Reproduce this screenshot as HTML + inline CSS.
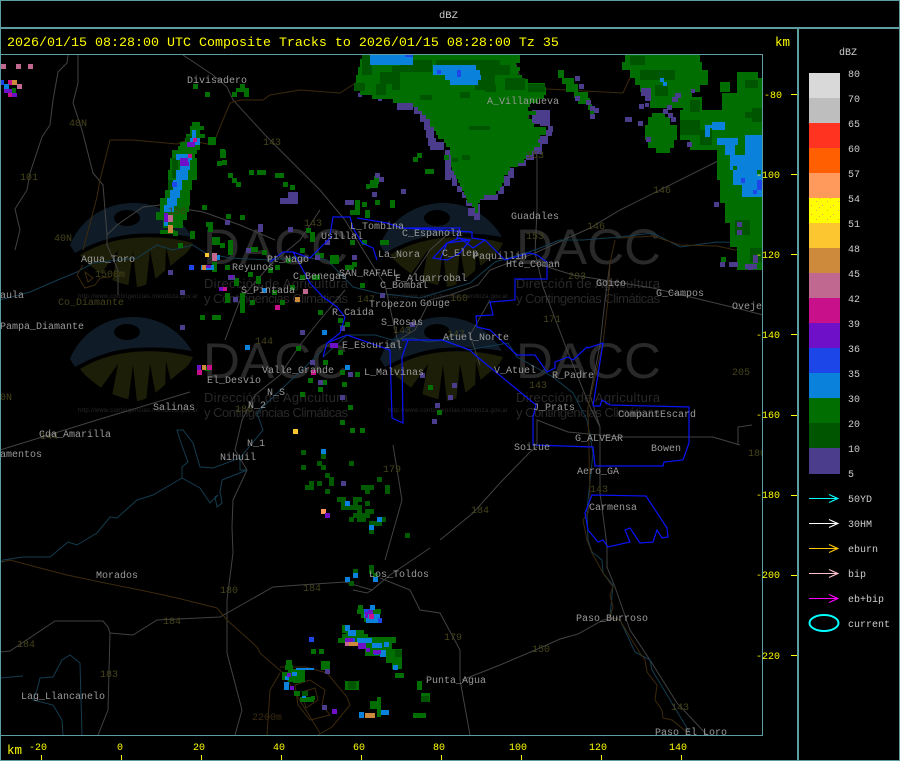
<!DOCTYPE html>
<html><head><meta charset="utf-8"><title>dBZ</title>
<style>
html,body{margin:0;padding:0;background:#000;width:900px;height:761px;overflow:hidden}
svg{display:block}
text{font-family:"Liberation Mono",monospace;font-size:10px}
.l text{fill:#9a9a9a}
.o text{fill:#45431a}
.y text{fill:#ff0}
.w text{fill:#292929;font-family:"Liberation Sans",sans-serif}
.c path,.c rect{shape-rendering:crispEdges}
</style></head><body>
<svg width="900" height="761" viewBox="0 0 900 761" xmlns="http://www.w3.org/2000/svg">
<defs><pattern id="sp" width="11" height="9" patternUnits="userSpaceOnUse"><rect x="2" y="3" width="1" height="1" fill="#f0a050"/><rect x="8" y="7" width="1" height="1" fill="#f09060"/><rect x="5" y="0" width="1" height="1" fill="#e8b040"/></pattern></defs>
<rect width="900" height="761" fill="#000"/>

<!-- watermark eyes -->
<g>
<path fill="#0f1c28" d="M70 245C80 220 105 203 133 203C160 203 180 217 192 237C170 233 152 233 133 234C112 236 92 243 75 253Z"/><ellipse cx="127" cy="218" rx="13" ry="8" fill="#000"/><path fill="#1c1e08" d="M80 255C95 246 112 240 133 238C155 236 175 238 193 243C190 250 186 254 180 258L160 275C152 282 145 286 137 287C122 284 112 281 103 275C93 268 85 262 80 255Z"/><path fill="#000" d="M118 250L98 278L112 282ZM133 251L128 288L137 288ZM150 250L146 288L156 282ZM166 247L165 279L172 272Z"/>
<path fill="#0f1c28" d="M380 245C390 220 415 203 443 203C470 203 490 217 502 237C480 233 462 233 443 234C422 236 402 243 385 253Z"/><ellipse cx="437" cy="218" rx="13" ry="8" fill="#000"/><path fill="#1c1e08" d="M390 255C405 246 422 240 443 238C465 236 485 238 503 243C500 250 496 254 490 258L470 275C462 282 455 286 447 287C432 284 422 281 413 275C403 268 395 262 390 255Z"/><path fill="#000" d="M428 250L408 278L422 282ZM443 251L438 288L447 288ZM460 250L456 288L466 282ZM476 247L475 279L482 272Z"/>
<path fill="#0f1c28" d="M70 359C80 334 105 317 133 317C160 317 180 331 192 351C170 347 152 347 133 348C112 350 92 357 75 367Z"/><ellipse cx="127" cy="332" rx="13" ry="8" fill="#000"/><path fill="#1c1e08" d="M80 369C95 360 112 354 133 352C155 350 175 352 193 357C190 364 186 368 180 372L160 389C152 396 145 400 137 401C122 398 112 395 103 389C93 382 85 376 80 369Z"/><path fill="#000" d="M118 364L98 392L112 396ZM133 365L128 402L137 402ZM150 364L146 402L156 396ZM166 361L165 393L172 386Z"/>
<path fill="#0f1c28" d="M380 359C390 334 415 317 443 317C470 317 490 331 502 351C480 347 462 347 443 348C422 350 402 357 385 367Z"/><ellipse cx="437" cy="332" rx="13" ry="8" fill="#000"/><path fill="#1c1e08" d="M390 369C405 360 422 354 443 352C465 350 485 352 503 357C500 364 496 368 490 372L470 389C462 396 455 400 447 401C432 398 422 395 413 389C403 382 395 376 390 369Z"/><path fill="#000" d="M428 364L408 392L422 396ZM443 365L438 402L447 402ZM460 364L456 402L466 396ZM476 361L475 393L482 386Z"/>
</g>
<g class="w">
<text x="203" y="264" textLength="145" lengthAdjust="spacingAndGlyphs" style="font-size:50px">DACC</text>
<text x="516" y="264" textLength="145" lengthAdjust="spacingAndGlyphs" style="font-size:50px">DACC</text>
<text x="203" y="378" textLength="145" lengthAdjust="spacingAndGlyphs" style="font-size:50px">DACC</text>
<text x="516" y="378" textLength="145" lengthAdjust="spacingAndGlyphs" style="font-size:50px">DACC</text>
<text x="204" y="288" textLength="144" style="font-size:13px">Dirección de Agricultura</text>
<text x="204" y="303" textLength="144" style="font-size:13px">y Contingencias Climáticas</text>
<text x="516" y="288" textLength="144" style="font-size:13px">Dirección de Agricultura</text>
<text x="516" y="303" textLength="144" style="font-size:13px">y Contingencias Climáticas</text>
<text x="204" y="402" textLength="144" style="font-size:13px">Dirección de Agricultura</text>
<text x="204" y="417" textLength="144" style="font-size:13px">y Contingencias Climáticas</text>
<text x="516" y="402" textLength="144" style="font-size:13px">Dirección de Agricultura</text>
<text x="516" y="417" textLength="144" style="font-size:13px">y Contingencias Climáticas</text>
<text x="78" y="298" textLength="120" style="font-size:6px">http://www.contingencias.mendoza.gov.ar</text>
<text x="388" y="298" textLength="120" style="font-size:6px">http://www.contingencias.mendoza.gov.ar</text>
<text x="78" y="412" textLength="120" style="font-size:6px">http://www.contingencias.mendoza.gov.ar</text>
<text x="388" y="412" textLength="120" style="font-size:6px">http://www.contingencias.mendoza.gov.ar</text>
</g>

<!-- roads -->
<g fill="none" stroke="#424242" stroke-width="1">
<path d="M68 55L67 63L58 72L53 100L50 125L42 137L30 173L27 190L15 209L20 230L15 250"/>
<path d="M78 55V83L73 103L82 130L93 173L103 185L107 235V245L118 270V295"/>
<path d="M107 235L117 225L143 207L160 205L203 212L240 225L275 240"/>
<path d="M183 55L213 75L227 87L233 100L267 137L293 163L320 190L345 220L360 245L385 285L395 330L400 350"/>
<path d="M513 55L520 77L527 107L532 137L537 157V210L535 253L543 287L567 350L590 407L600 427V493L605 530L607 548V567L615 587L630 630L650 660L677 703L707 735"/>
<path d="M762 139L620 210L590 228L535 253L490 270L478 285L450 295L430 300L415 330L390 345"/>
<path d="M535 263L573 275L653 288L740 309L763 315"/>
<path d="M440 540L473 513L500 483L530 452L537 447V420L555 427L568 432L620 437H713L740 445M738 445V427L752 425"/>
<path d="M242 420L235 450L247 470L233 500L232 527L233 553L227 600V653L242 710L235 735M242 420L255 395L280 375L300 345L320 320L345 290"/>
<path d="M0 652L10 651L55 621H103L108 627L110 633L108 710L98 735M110 633L133 635L157 620L220 617L250 600L273 587L300 585L345 582L372 590L367 593L353 590"/>
<path d="M372 590L390 575L430 548M380 578L410 590L420 610L440 613L460 650V680L470 735"/>
<path d="M462 680L500 665L540 648L560 639L578 634L603 620L618 618"/>
<path d="M0 450L97 420L190 392"/>
<path d="M610 263L605 300L600 345L590 395L600 427"/>
<path d="M320 210L300 240L270 265L240 300L225 340M410 280L430 250L450 232M490 300L470 335L480 365"/>
<path d="M393 445L402 500L385 560"/>
</g>
<!-- rivers -->
<g fill="none" stroke="#143c50" stroke-width="1">
<path d="M0 300L30 292L60 279L77 272L93 263L137 258L157 245L173 250L193 245L205 253L230 258L270 260L303 257L327 260L353 287L377 293L420 298L470 283L495 262L535 250L560 240H583L620 237L653 233L680 247L717 242L763 243"/>
<path d="M323 357L347 335H375L392 340L412 338L428 342L445 340L468 350L508 343L517 357L553 377L573 393L587 420L593 453L587 510L588 540L592 552L602 560L603 573L613 585L610 617L620 620L635 652L650 660L652 670L690 733"/>
<path d="M323 350L270 400L257 413L263 430L240 458L213 468L200 467L193 443L183 430H177L180 440L188 462L182 467V478L200 488L210 503L218 495L215 497L217 507L222 503L220 492L222 480L247 470H240L240 458"/>
<path d="M182 478L153 495L137 500L117 518L110 517L97 533L77 545L68 542L50 557H23L3 560L0 563"/>
<path d="M0 678L23 676M82 735L80 663L70 655L62 660L53 677L40 678L37 690L33 700L53 705L62 720L63 735"/>
</g>
<!-- brown -->
<g fill="none" stroke="#3c2a0c" stroke-width="1">
<path d="M83 250L97 197L100 180L110 140H133L177 144L187 140L213 145L220 127L230 103L240 100H263L270 95L300 90L340 93L357 82L370 72H387L400 75L413 82L427 87H453L473 82L487 87L547 89L623 93L635 67L640 55"/>
<path d="M2 562L10 560L40 568L67 575L100 582L140 590L177 598L217 608L227 620L257 647L260 653L283 673L320 733"/>
<path d="M615 240L610 263L608 300L603 343L588 407L590 497L588 513L583 520L587 540L592 553L603 573L613 587L610 595L613 607L610 617L620 620L630 637L640 653L645 660L647 672L657 685L655 700L662 710L663 718L672 720L688 733"/>
<path d="M620 238L653 236L680 245L717 246L735 250L760 244"/>
<path d="M280 673L270 690L267 735M280 667H305L327 673L347 697L350 705L332 727L318 735M295 685L310 680L325 690L322 705L330 715L310 720L298 705ZM302 692L315 688L318 700L306 708Z"/>
<path d="M83 265L77 275L85 288L95 285L100 278L110 277M85 272L93 278L88 282Z"/>
</g>

<!-- radar cells -->
<g class="c">
<!-- indigo edge main -->
<path fill="#4b3c8c" d="M398 90h8v8h-8zM397 98h16v12h-16zM414 106h10v8h-10zM420 114h10v8h-10zM424 122h10v8h-10zM426 130h8v8h-8zM428 138h8v8h-8zM430 142h14v8h-14zM436 130h10v5h-10zM445 150h6v30h-6zM450 170h6v8h-6zM452 178h5v8h-5zM457 186h5v6h-5zM462 192h5v6h-5zM466 200h10v6h-10zM474 204h6v16h-6zM468 208h6v8h-6zM478 194h20v6h-20zM498 186h6v8h-6zM504 176h6v10h-6zM508 168h6v10h-6zM518 160h8v6h-8zM526 150h8v10h-8zM534 144h8v10h-8zM538 136h10v8h-10zM546 130h6v6h-6zM548 126h5v6h-5zM540 120h10v6h-10zM532 110h18v14h-18zM528 94h5v5h-5zM510 94h5v5h-5zM358 93h4v4h-4zM378 97h4v4h-4z"/>
<!-- main blob green -->
<path fill="#006e00" d="M362 55H520V59H362zM360 59H520V63H360zM360 63H516V67H360zM358 67H520V71H358zM358 71H518V75H358zM356 75H522V79H356zM356 79H528V83H356zM354 83H545V87H354zM354 87H546V91H354zM360 91H546V95H360zM372 95H544V99H372zM393 99H538V103H393zM413 103H530V107H413zM418 107H528V111H418zM422 111H536V115H422zM426 115H528V119H426zM430 119H532V123H430zM430 123H534V127H430zM434 127H546V131H434zM436 131H546V135H436zM438 135H540V139H438zM444 139H538V143H444zM446 143H540V147H446zM450 147H534V151H450zM450 151H532V155H450zM451 155H526V159H451zM451 159H524V163H451zM451 163H518V167H451zM452 167H510V171H452zM454 171H508V175H454zM456 175H504V179H456zM458 179H504V183H458zM460 183H502V187H460zM462 187H500V191H462zM464 191H496V195H464zM466 195H484V199H466zM467 199H480V203H467zM472 203H478V207H472zM475 207H478V213H475z"/>
<path fill="#005500" d="M362 55H372V75H362zM380 72H400V84H380zM354 83H365V91H354zM400 60H432V72H400zM376 84H386V95H376zM392 66H400V90H392zM436 60H500V65H436zM470 65H510V75H470zM475 75H495V90H475zM505 78H525V90H505zM528 84H545V92H528zM485 85H496V92H485zM420 95H432V100H420zM460 92H470V98H460zM452 158H458V162H452zM469 126H490V130H469zM462 155H470V160H462z"/>
<path fill="#0a82dc" d="M370 55H413V65H370zM433 65H476V70H433zM433 70H480V75H433zM445 75H481V80H445zM450 80H478V85H450z"/>
<path fill="#1c46e8" d="M405 55H413V57H405zM437 70H441V74H437zM457 70H461V77H457z"/>
<!-- satellite cells -->
<path fill="#006e00" d="M558 70H564V78H558zM562 78H574V84H562zM566 84H578V92H566zM574 92H588V98H574zM578 98H590V104H578zM588 104H592V110H588zM590 110H594V115H590z"/>
<path fill="#4b3c8c" d="M575 76h5v5h-5zM579 84h5v5h-5zM575 96h5v5h-5zM586 100h5v5h-5zM590 106h5v5h-5zM594 108h5v5h-5zM590 114h5v5h-5zM627 117h5v5h-5zM638 121h5v5h-5z"/>
<path fill="#006e00" d="M440 110h5v5h-5zM444 155h5v5h-5zM417 153h5v5h-5zM413 157h5v5h-5zM425 169h9v5h-9zM374 176h5v8h-5zM370 180h8v8h-8zM366 184h4v5h-4z"/>
<path fill="#4b3c8c" d="M375 173h5v5h-5zM379 177h5v5h-5zM372 192h5v5h-5zM401 189h5v5h-5z"/>
<!-- top right -->
<path fill="#006e00" d="M625 55H700V62H625zM622 62H702V70H622zM630 70H708V78H630zM635 78H708V85H635zM640 85H700V92H640zM645 92H692V100H645zM650 100H690V108H650zM652 113H665V117H652zM648 117H670V125H648zM645 125H677V140H645zM648 140H674V148H648zM656 148H670V153H656zM737 72H758V78H737zM737 78H762V93H737zM720 82H730V92H720zM722 93H762V110H722zM683 97H702V110H683zM680 110H762V140H680zM690 140H762V150H690zM717 150H762V180H717zM720 180H762V203H720zM725 203H762V223H725zM730 223H762V247H730zM737 247H762V270H737z"/>
<path fill="#005500" d="M745 80H758V88H745zM680 120H700V135H680zM690 100H700V112H690zM640 70H675V80H640zM630 56H645V65H630zM655 85H668V96H655zM700 130H712V145H700zM752 108H762V122H752zM745 112H752V118H745zM735 220H750V235H735zM750 248H762V262H750z"/>
<path fill="#0a82dc" d="M705 125H725V128H705zM705 128H710V137H705zM712 122H725V130H712zM717 138H738V145H717zM725 145H735V155H725zM745 135H762V157H745zM730 155H762V170H730zM733 170H762V185H733zM742 185H762V197H742zM660 78h4v4h-4zM663 82h4v4h-4z"/>
<path fill="#1c46e8" d="M741 178h4v5h-4zM757 180h5v10h-5zM753 190h4v4h-4z"/>
<path fill="#006e00" d="M757 170h4v4h-4zM733 166h4v4h-4z"/>
<path fill="#4b3c8c" d="M641 88h10v8h-10zM645 96h6v5h-6zM645 103h4v4h-4zM672 97h6v5h-6zM675 93h6v5h-6zM691 89h4v4h-4zM667 105h5v5h-5zM639 104h5v5h-5zM663 109h5v5h-5zM668 113h5v5h-5zM671 117h5v5h-5zM625 117h5v5h-5zM646 137h5v5h-5zM687 142h5v5h-5zM714 202h5v5h-5zM737 222h5v5h-5zM737 230h5v5h-5zM753 255h5v8h-5zM720 262h5v5h-5zM729 262h9v5h-9zM745 264h12v5h-12zM748 264h5v6h-5z"/>
<path fill="#006e00" d="M721 257h5v5h-5z"/>
<!-- far left top -->
<path fill="#c06890" d="M0 64h6v5H0zM16 64h5v5h-5zM28 64h5v5h-5zM17 84h5v5h-5z"/>
<path fill="#c8108a" d="M8 80h4v5H8zM8 93h4v4H8z"/><path fill="#cd8a3c" d="M12 80h5v5h-5z"/><path fill="#1c46e8" d="M1 80h3v5H1z"/><path fill="#0a82dc" d="M4 84h5v5H4z"/><path fill="#6e10c8" d="M4 89h8v4H4zM12 93h5v4h-5z"/><path fill="#006e00" d="M12 88h4v5h-4z"/>
<!-- left storm -->
<path fill="#006e00" d="M192 122H200V126H192zM190 126H204V130H190zM190 130H200V134H190zM186 134H205V138H186zM185 138H200V142H185zM180 142H200V146H180zM178 146H200V150H178zM172 150H197V154H172zM172 154H195V158H172zM170 158H197V170H170zM168 170H197V180H168zM168 180H192V190H168zM165 190H190V198H165zM160 198H190V206H160zM160 206H189V212H160zM156 212H187V220H156zM163 220H183V228H163zM160 230H175V234H160zM208 137H216V145H208zM220 150h6v8h-6z"/>
<path fill="#005500" d="M172 158h6v20h-6zM168 180h5v10h-5zM186 136h6v6h-6z"/>
<path fill="#0a82dc" d="M192 130H196V138H192zM190 138H200V145H190zM176 154H192V160H176zM180 160H190V170H180zM176 170H188V180H176zM173 180H182V190H173zM170 190H180V198H170zM167 198H177V206H167zM164 205H174V212H164zM164 222H168V226H164z"/>
<path fill="#6e10c8" d="M180 158h8v8h-8zM180 162h9v4h-9zM187 142h8v5h-8zM164 213h4v9h-4z"/>
<path fill="#c8108a" d="M193 138h4v4h-4zM188 154h4v4h-4z"/>
<path fill="#1c46e8" d="M172 182h5v5h-5z"/>
<path fill="#c06890" d="M168 215h5v7h-5z"/><path fill="#cd8a3c" d="M168 225h5v8h-5z"/>
<!-- scattered green -->
<path fill="#006e00" d="M193 84h5v5h-5zM205 92h5v5h-5zM240 84h5v5h-5zM236 88h13v4h-13zM232 92h5v5h-5zM244 92h5v5h-5zM220 149h5v5h-5zM222 160h5v5h-5zM217 161h5v5h-5zM249 170h5v5h-5zM257 170h9v5h-9zM275 173h9v5h-9zM228 173h5v5h-5zM232 178h5v5h-5zM236 182h5v5h-5zM283 182h5v5h-5zM290 185h5v5h-5zM202 205h5v5h-5zM206 222h5v5h-5zM226 214h5v5h-5zM190 231h5v8h-5zM173 231h5v5h-5zM178 243h5v5h-5zM208 222h5v10h-5zM212 237h8v8h-8zM220 243h5v5h-5zM228 240h5v15h-5zM240 215h5v5h-5zM250 247h8v5h-8zM262 250h5v5h-5zM225 265h5v5h-5zM212 262h5v10h-5zM234 278h5v8h-5zM248 272h5v5h-5zM256 276h5v8h-5zM268 268h5v5h-5zM272 290h5v5h-5zM290 285h5v5h-5zM280 300h5v5h-5zM275 265h5v5h-5zM300 275h5v5h-5zM312 275h8v5h-8zM286 258h5v5h-5zM300 248h5v5h-5zM310 232h5v10h-5zM306 228h5v5h-5zM315 253h9v5h-9zM330 255h9v9h-9zM345 265h9v5h-9zM352 262h5v5h-5zM360 283h5v5h-5zM318 310h5v5h-5zM338 318h5v5h-5zM200 315h5v5h-5zM212 315h9v5h-9zM205 366h5v5h-5zM296 346h5v5h-5zM338 350h5v5h-5zM300 330h5v5h-5zM340 325h5v5h-5zM345 322h5v5h-5zM375 200h5v5h-5zM350 210h10v5h-10zM355 200h5v10h-5zM362 202h5v5h-5zM365 210h5v8h-5zM380 240h9v5h-9zM350 240h5v5h-5zM362 240h5v5h-5zM390 200h5v8h-5zM250 300h5v5h-5zM225 293h5v10h-5zM240 293h5v20h-5zM323 360h5v5h-5zM340 370h5v5h-5zM355 372h5v5h-5zM322 380h5v5h-5zM342 382h5v5h-5zM308 378h5v5h-5zM340 420h5v5h-5zM350 428h5v5h-5zM360 428h5v5h-5zM348 405h5v5h-5zM318 387h5v5h-5zM300 392h5v5h-5zM428 385h5v5h-5zM437 410h5v5h-5z"/>
<!-- mid cluster -->
<path fill="#005a00" d="M301 450h5v5h-5zM321 454h5v5h-5zM301 465h5v5h-5zM317 461h5v5h-5zM321 465h5v5h-5zM349 461h5v5h-5zM325 473h5v5h-5zM329 477h5v9h-5zM309 481h5v9h-5zM305 485h5v5h-5zM317 481h5v5h-5zM325 489h5v5h-5zM377 477h5v5h-5zM361 485h13v5h-13zM365 489h5v5h-5zM385 485h5v9h-5zM337 497h9v5h-9zM341 501h5v5h-5zM353 497h9v5h-9zM353 501h5v5h-5zM365 501h5v5h-5zM341 505h21v5h-21zM357 509h5v5h-5zM365 509h9v5h-9zM353 513h17v5h-17zM349 517h5v5h-5zM357 517h9v5h-9zM381 517h5v5h-5zM369 521h13v5h-13zM369 529h5v5h-5zM405 533h5v5h-5zM353 569h5v5h-5zM349 581h5v5h-5zM369 565h5v9h-5zM373 573h5v5h-5z"/>
<path fill="#0a82dc" d="M321 449h5v5h-5zM345 501h5v5h-5zM377 517h5v5h-5zM369 525h5v5h-5zM353 573h5v5h-5zM345 577h5v5h-5zM373 577h5v5h-5z"/>
<path fill="#4b3c8c" d="M341 481h5v5h-5z"/>
<path fill="#ff9a5c" d="M321 509h5v5h-5z"/><path fill="#6e10c8" d="M325 513h5v5h-5z"/>
<path fill="#4b3c8c" d="M345 200h9v5h-9zM258 224h5v8h-5zM225 220h5v5h-5zM300 330h5v5h-5zM348 372h5v5h-5zM410 322h5v5h-5zM420 373h5v5h-5zM452 383h5v5h-5zM448 395h5v5h-5zM435 403h5v5h-5zM432 419h5v5h-5zM340 395h5v5h-5zM180 290h5v5h-5zM230 275h5v5h-5zM233 297h5v5h-5zM380 293h5v5h-5zM352 255h5v5h-5zM315 255h5v5h-5zM288 227h5v5h-5zM325 240h5v5h-5zM246 248h5v5h-5zM340 326h5v5h-5zM310 360h5v5h-5zM318 380h5v5h-5zM180 325h5v5h-5zM228 275h5v5h-5zM168 270h5v5h-5zM288 192h10v12h-10zM280 198h10v6h-10z"/>
<path fill="#0a82dc" d="M201 265h13v5h-13zM262 288h5v5h-5zM322 330h5v5h-5zM345 365h5v5h-5zM245 345h5v5h-5zM214 255h6v5h-6z"/>
<path fill="#1c46e8" d="M189 265h5v5h-5z"/>
<path fill="#c8108a" d="M222 287h5v4h-5zM207 365h5v5h-5zM275 305h5v5h-5zM311 370h5v5h-5zM197 370h5v5h-5z"/>
<path fill="#6e10c8" d="M219 287h4v4h-4zM197 365h4v5h-4zM330 343h8v5h-8zM206 265h5v3h-5zM230 275h3v3h-3z"/>
<path fill="#cd8a3c" d="M202 265h4v5h-4zM295 297h5v5h-5zM202 365h4v5h-4z"/>
<path fill="#c06890" d="M212 253h5v8h-5zM303 289h5v5h-5z"/>
<path fill="#fcc630" d="M205 253h4v4h-4zM293 429h5v5h-5z"/>
<!-- lower clusters -->
<path fill="#006e00" d="M358 605h5v4h-5zM357 609h24v5h-24zM361 614h19v4h-19zM364 618h16v4h-16zM342 625h4v8h-4zM346 630h18v4h-18zM342 634h26v4h-26zM338 638h20v5h-20zM356 637h40v6h-40zM362 643h30v6h-30zM365 649h37v7h-37zM386 656h16v7h-16zM392 663h10v6h-10zM311 649h5v5h-5zM319 649h5v5h-5zM321 661h9v9h-9zM345 681h14v9h-14zM350 685h8v5h-8zM395 673h9v5h-9zM417 681h5v9h-5zM421 693h9v9h-9zM377 697h4v20h-4zM413 713h13v5h-13zM285 665h8v5h-8zM286 660h6v5h-6zM288 669h17v13h-17zM282 672h6v8h-6zM293 675h8v8h-8zM294 691h6v5h-6zM300 697h8v5h-8zM308 697h6v5h-6zM311 696h4v4h-4zM370 701h10v8h-10z"/>
<path fill="#0a82dc" d="M370 605h5v5h-5zM366 618h12v5h-12zM364 614h16v4h-16zM345 625h5v6h-5zM348 630h8v6h-8zM352 638h2v5h-2zM357 638h6v5h-6zM362 638h10v5h-10zM372 643h10v5h-10zM384 642h5v5h-5zM380 650h6v7h-6zM393 665h5v5h-5zM359 712h5v6h-5zM381 710h8v5h-8zM292 672h5v4h-5zM285 676h4v4h-4zM284 682h5v8h-5zM302 694h4v4h-4zM296 668h18v2h-18z"/>
<path fill="#1c46e8" d="M309 637h5v5h-5zM364 609h6v5h-6zM378 618h4v5h-4zM374 650h5v5h-5zM349 638h6v5h-6zM369 614h4v4h-4z"/>
<path fill="#6e10c8" d="M345 638h8v5h-8zM358 643h8v6h-8zM368 610h5v4h-5zM373 650h8v4h-8zM287 673h4v4h-4zM290 686h4v4h-4zM332 709h5v5h-5zM366 648h4v4h-4zM365 612h3v6h-3z"/>
<path fill="#c8108a" d="M369 614h5v5h-5z"/>
<path fill="#c06890" d="M345 642h5v4h-5z"/><path fill="#cd8a3c" d="M349 642h9v4h-9zM365 713h10v5h-10z"/>
<path fill="#4b3c8c" d="M325 669h5v5h-5zM322 705h5v5h-5z"/>
<path fill="#005500" d="M302 691h6v5h-6zM395 650h7v7h-7zM348 681h8v8h-8zM421 696h8v6h-8z"/>
</g>

<!-- zones -->
<g fill="none" stroke="#0a14f5" stroke-width="1.2">
<path d="M593 406H600L602 400L610 405L689 407V443L683 460L664 462L663 466H595L593 447L533 445V417L536 405L475 355L470 350L442 340H402"/>
<path d="M593 406L603 343L588 348L587 347L573 360L568 357L555 362V368L547 372L535 355H517L490 330L477 327L476 316L493 315L490 302L515 300V279H547V262L537 255L530 253L505 260L485 240L472 238V232L440 230L402 228H460L457 238L470 240"/>
<path d="M592 495L646 496L667 528L668 537L662 538L657 530L653 542L640 543L630 528L625 530L630 542L608 547L603 540L598 542L588 530L585 513Z"/>
<path d="M323 357L327 343L347 335L390 350L392 418L403 423L402 357L408 340"/>
<path d="M327 343L340 333L345 317L337 307L323 297L310 283L303 270L293 252H283L270 262"/>
<path d="M330 235L333 217H350L353 228L362 243L373 248L377 260M357 218L387 223L402 228M433 258L447 243L470 240L460 253L447 260ZM440 260L447 243L460 238L473 248L485 240"/>
<path d="M293 252L310 258L332 236"/>
</g>

<!-- olive road labels -->
<g class="o">
<text x="69" y="126">40N</text><text x="20" y="180">101</text><text x="54" y="241">40N</text><text x="168" y="214">150</text><text x="263" y="145">143</text><text x="304" y="226">143</text><text x="526" y="239">153</text><text x="526" y="158">153</text><text x="653" y="193">146</text><text x="587" y="229">146</text><text x="568" y="279">203</text><text x="543" y="322">171</text><text x="732" y="375">205</text><text x="447" y="337">147</text><text x="393" y="333">143</text><text x="357" y="302">147</text><text x="450" y="301">160</text><text x="255" y="344">144</text><text x="235" y="412">180</text><text x="529" y="388">143</text><text x="471" y="513">184</text><text x="590" y="492">143</text><text x="383" y="472">179</text><text x="303" y="591">184</text><text x="220" y="593">180</text><text x="163" y="624">184</text><text x="17" y="647">184</text><text x="100" y="677">183</text><text x="444" y="640">179</text><text x="532" y="652">150</text><text x="671" y="710">143</text><text x="252" y="720" style="fill:#3a2a10">2200m</text><text x="0" y="400">0N</text><text x="95" y="277">1500m</text><text x="58" y="305">Co_Diamante</text><text x="40" y="439">144</text><text x="748" y="456">180</text>
</g>

<!-- place labels -->
<g class="l">
<text x="187" y="83">Divisadero</text><text x="487" y="104">A_Villanueva</text><text x="511" y="219">Guadales</text><text x="350" y="229">L_Tombina</text><text x="321" y="239">Usillal</text><text x="402" y="236">C_Espanola</text><text x="378" y="257">La_Nora</text><text x="442" y="256">C_Elep</text><text x="473" y="259">Paquillin</text><text x="506" y="267">Hte_Coman</text><text x="596" y="286">Goico</text><text x="656" y="296">G_Campos</text><text x="732" y="309">Oveje</text><text x="81" y="262">Agua_Toro</text><text x="0" y="298">aula</text><text x="0" y="329">Pampa_Diamante</text><text x="232" y="270">Reyunos</text><text x="267" y="262">Pt_Nago</text><text x="241" y="293">S_Pintada</text><text x="293" y="279">C_Benegas</text><text x="339" y="276">SAN_RAFAEL</text><text x="395" y="281">E_Algarrobal</text><text x="380" y="288">C_Bombal</text><text x="369" y="307">Tropezon</text><text x="420" y="306">Gouge</text><text x="332" y="315">R_Caida</text><text x="381" y="325">S_Rosas</text><text x="443" y="340">Atuel_Norte</text><text x="342" y="348">E_Escurial</text><text x="364" y="375">L_Malvinas</text><text x="494" y="373">V_Atuel</text><text x="552" y="378">R_Padre</text><text x="533" y="410">J_Prats</text><text x="618" y="417">CompantEscard</text><text x="575" y="441">G_ALVEAR</text><text x="514" y="450">Soitue</text><text x="651" y="451">Bowen</text><text x="577" y="474">Aero_GA</text><text x="589" y="510">Carmensa</text><text x="262" y="373">Valle_Grande</text><text x="207" y="383">El_Desvio</text><text x="153" y="410">Salinas</text><text x="267" y="395">N_S</text><text x="248" y="408">N_2</text><text x="247" y="446">N_1</text><text x="220" y="460">Nihuil</text><text x="39" y="437">Cda_Amarilla</text><text x="0" y="457">amentos</text><text x="96" y="578">Morados</text><text x="369" y="577">Los_Toldos</text><text x="576" y="621">Paso_Burroso</text><text x="426" y="683">Punta_Agua</text><text x="21" y="699">Lag_Llancanelo</text><text x="655" y="735">Paso_El_Loro</text>
</g>

<!-- black chrome outside map -->
<g class="c">
<rect x="0" y="0" width="900" height="54" fill="#000"/>
<rect x="0" y="736" width="900" height="25" fill="#000"/>
<rect x="763" y="54" width="137" height="707" fill="#000"/>
<g fill="#5f9ea0">
<rect x="0" y="0" width="900" height="1"/><rect x="0" y="27" width="900" height="2"/><rect x="0" y="54" width="763" height="1"/><rect x="0" y="735" width="763" height="1"/><rect x="0" y="760" width="900" height="1"/><rect x="0" y="0" width="1" height="761"/><rect x="899" y="0" width="1" height="761"/><rect x="797" y="28" width="2" height="733"/><rect x="762" y="54" width="1" height="682"/>
</g>
<!-- colour bar -->
<rect x="809" y="73" width="31" height="25" fill="#d9d9d9"/>
<rect x="809" y="98" width="31" height="25" fill="#bebebe"/>
<rect x="809" y="123" width="31" height="25" fill="#ff3320"/>
<rect x="809" y="148" width="31" height="25" fill="#ff5f00"/>
<rect x="809" y="173" width="31" height="25" fill="#ff9a5c"/>
<rect x="809" y="198" width="31" height="25" fill="#ff0"/><rect x="809" y="198" width="31" height="25" fill="url(#sp)"/>
<rect x="809" y="223" width="31" height="25" fill="#fcc630"/>
<rect x="809" y="248" width="31" height="25" fill="#cd8a3c"/>
<rect x="809" y="273" width="31" height="25" fill="#c06890"/>
<rect x="809" y="298" width="31" height="25" fill="#c8108a"/>
<rect x="809" y="323" width="31" height="25" fill="#6e10c8"/>
<rect x="809" y="348" width="31" height="25" fill="#1c46e8"/>
<rect x="809" y="373" width="31" height="25" fill="#0a82dc"/>
<rect x="809" y="398" width="31" height="25" fill="#006e00"/>
<rect x="809" y="423" width="31" height="25" fill="#005500"/>
<rect x="809" y="448" width="31" height="26" fill="#4b3c8c"/>
<!-- ticks -->
<g fill="#ff0">
<rect x="791" y="94" width="6" height="1"/><rect x="791" y="174" width="6" height="1"/><rect x="791" y="254" width="6" height="1"/><rect x="791" y="334" width="6" height="1"/><rect x="791" y="415" width="6" height="1"/><rect x="791" y="495" width="6" height="1"/><rect x="791" y="575" width="6" height="1"/><rect x="791" y="655" width="6" height="1"/>
<rect x="41" y="755" width="1" height="5"/><rect x="121" y="755" width="1" height="5"/><rect x="201" y="755" width="1" height="5"/><rect x="281" y="755" width="1" height="5"/><rect x="361" y="755" width="1" height="5"/><rect x="441" y="755" width="1" height="5"/><rect x="521" y="755" width="1" height="5"/><rect x="601" y="755" width="1" height="5"/><rect x="681" y="755" width="1" height="5"/>
</g>
</g>
<g class="y">
<text x="7" y="46" style="font-size:13.33px">2026/01/15 08:28:00 UTC Composite Tracks to 2026/01/15 08:28:00 Tz 35</text>
<text x="775" y="46" style="font-size:12.5px">km</text><text x="7" y="754" style="font-size:12.5px">km</text>
<text x="764" y="98">-80</text><text x="756" y="178">-100</text><text x="756" y="258">-120</text><text x="756" y="338">-140</text><text x="756" y="418">-160</text><text x="756" y="498">-180</text><text x="756" y="578">-200</text><text x="756" y="659">-220</text>
<text x="29" y="750">-20</text><text x="117" y="750">0</text><text x="193" y="750">20</text><text x="273" y="750">40</text><text x="353" y="750">60</text><text x="433" y="750">80</text><text x="509" y="750">100</text><text x="589" y="750">120</text><text x="669" y="750">140</text>
</g>
<g fill="#cdcdcd">
<text x="439" y="18" style="font-size:10.5px">dBZ</text>
<text x="839" y="55">dBZ</text>
<text x="848" y="77">80</text><text x="848" y="102">70</text><text x="848" y="127">65</text><text x="848" y="152">60</text><text x="848" y="177">57</text><text x="848" y="202">54</text><text x="848" y="227">51</text><text x="848" y="252">48</text><text x="848" y="277">45</text><text x="848" y="302">42</text><text x="848" y="327">39</text><text x="848" y="352">36</text><text x="848" y="377">35</text><text x="848" y="402">30</text><text x="848" y="427">20</text><text x="848" y="452">10</text><text x="848" y="477">5</text>
<text x="848" y="502">50YD</text><text x="848" y="527">30HM</text><text x="848" y="552">eburn</text><text x="848" y="577">bip</text><text x="848" y="602">eb+bip</text><text x="848" y="627">current</text>
</g>
<g fill="none" stroke-width="1">
<path stroke="#0ff" d="M809 498.500H838M829 494.500L838 498.500L829 502.500M832 496L838 498.500L832 501"/>
<path stroke="#fff" d="M809 523.500H838M829 519.500L838 523.500L829 527.500M832 521L838 523.500L832 526"/>
<path stroke="#ffc800" d="M809 548.500H838M829 544.500L838 548.500L829 552.500M832 546L838 548.500L832 551"/>
<path stroke="#ffc0cb" d="M809 573.500H838M829 569.500L838 573.500L829 577.500M832 571L838 573.500L832 576"/>
<path stroke="#f0f" d="M809 598.500H838M829 594.500L838 598.500L829 602.500M832 596L838 598.500L832 601"/>
<ellipse cx="824" cy="623" rx="14.500" ry="8" stroke="#0ff" stroke-width="2"/>
</g>
</svg>
</body></html>
